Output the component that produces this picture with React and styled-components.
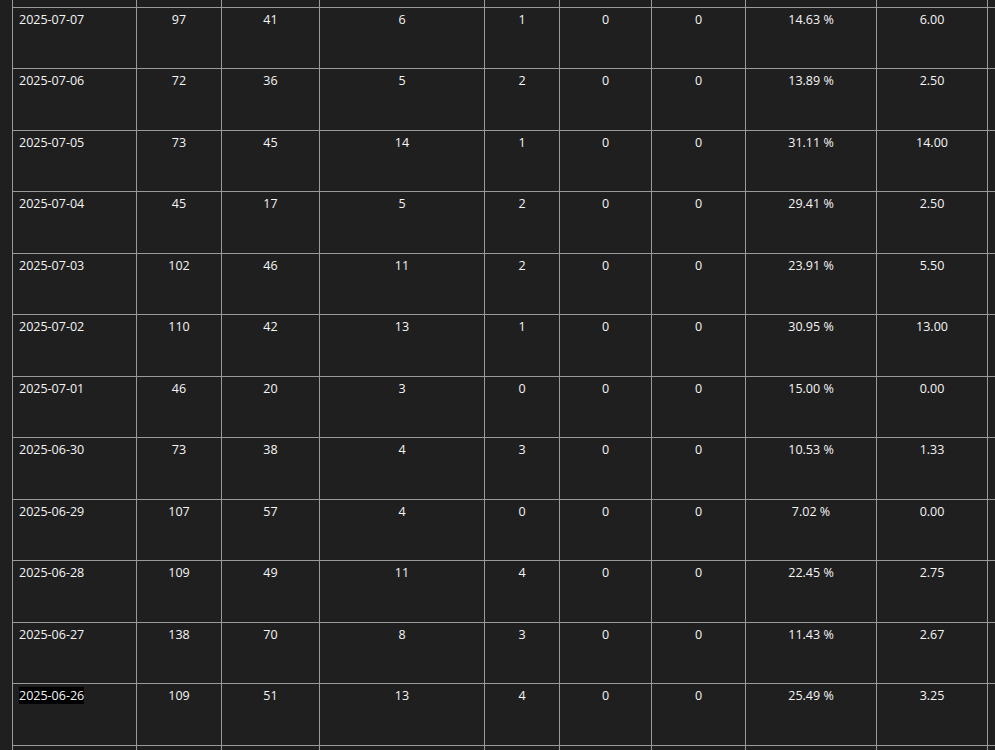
import React from "react";
import styled, { createGlobalStyle } from "styled-components";

const GlobalStyle = createGlobalStyle`
  html, body {
    margin: 0;
    padding: 0;
    background: #1f1f1f;
    overflow: hidden;
  }
  body {
    font-family: "Open Sans", "Liberation Sans", sans-serif;
    color: #f5f5f5;
  }
`;

const Page = styled.div`
  padding-left: 12px;
  margin-top: -55px;
  width: 1200px;
`;

const Table = styled.table`
  border-collapse: collapse;
  table-layout: fixed;
  background: #1f1f1f;
`;

const Row = styled.tr`
  height: 61.5px;
`;

const Cell = styled.td`
  border: 1px solid #9a9a9a;
  padding: 3px 6px;
  vertical-align: top;
  font-size: 12.5px;
  line-height: 17px;
  text-align: ${(p) => (p.$left ? "left" : "center")};
  white-space: nowrap;
`;

const Marked = styled.span`
  background: #000;
`;

const widths = [124, 85, 98, 165, 75, 92, 94, 131, 111, 160];

const rows = [
  ["2025-07-07", "97", "41", "6", "1", "0", "0", "14.63 %", "6.00"],
  ["2025-07-06", "72", "36", "5", "2", "0", "0", "13.89 %", "2.50"],
  ["2025-07-05", "73", "45", "14", "1", "0", "0", "31.11 %", "14.00"],
  ["2025-07-04", "45", "17", "5", "2", "0", "0", "29.41 %", "2.50"],
  ["2025-07-03", "102", "46", "11", "2", "0", "0", "23.91 %", "5.50"],
  ["2025-07-02", "110", "42", "13", "1", "0", "0", "30.95 %", "13.00"],
  ["2025-07-01", "46", "20", "3", "0", "0", "0", "15.00 %", "0.00"],
  ["2025-06-30", "73", "38", "4", "3", "0", "0", "10.53 %", "1.33"],
  ["2025-06-29", "107", "57", "4", "0", "0", "0", "7.02 %", "0.00"],
  ["2025-06-28", "109", "49", "11", "4", "0", "0", "22.45 %", "2.75"],
  ["2025-06-27", "138", "70", "8", "3", "0", "0", "11.43 %", "2.67"],
  ["2025-06-26", "109", "51", "13", "4", "0", "0", "25.49 %", "3.25"],
];

const EmptyRow = () => (
  <Row>
    {widths.map((_, i) => (
      <Cell key={i} />
    ))}
  </Row>
);

export default function App() {
  return (
    <>
      <GlobalStyle />
      <Page>
        <Table>
          <colgroup>
            {widths.map((w, i) => (
              <col key={i} style={{ width: w }} />
            ))}
          </colgroup>
          <tbody>
            <EmptyRow />
            {rows.map((r) => (
              <Row key={r[0]}>
                {r.map((v, i) => (
                  <Cell key={i} $left={i === 0}>
                    {i === 0 && r[0] === "2025-06-26" ? <Marked>{v}</Marked> : v}
                  </Cell>
                ))}
                <Cell />
              </Row>
            ))}
            <EmptyRow />
          </tbody>
        </Table>
      </Page>
    </>
  );
}
